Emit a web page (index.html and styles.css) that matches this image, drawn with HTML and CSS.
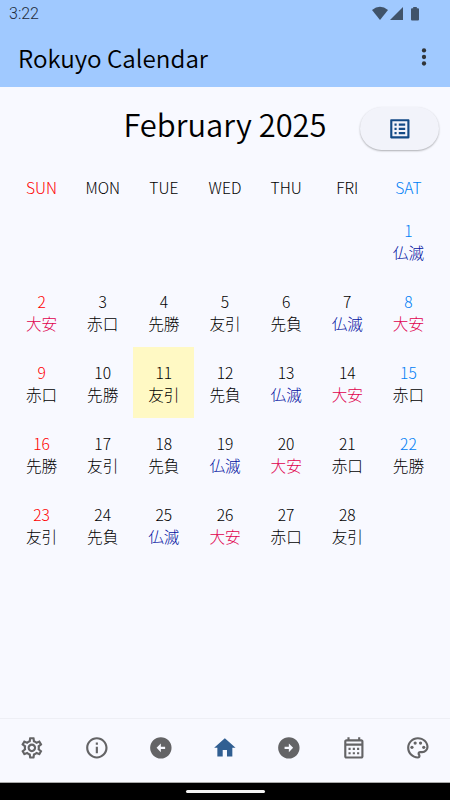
FILE: index.html
```html
<!DOCTYPE html>
<html lang="ja">
<head>
<meta charset="utf-8">
<meta name="viewport" content="width=device-width, initial-scale=1">
<title>Rokuyo Calendar</title>
<link rel="stylesheet" href="styles.css">
</head>
<body>
<header class="top">
  <div class="status">
    <span class="clock">3:22</span>
    <svg class="status-icons" viewBox="0 0 50 16" aria-hidden="true">
      <path d="M0 4Q8 -2.5 16 4L8 14Z"/>
      <path d="M31 1V14H18Z"/>
      <path d="M41.2 1h3.6v1.3H46q1 0 1 1V13.500q0 1-1 1h-6q-1 0-1-1V3.300q0-1 1-1h1.200Z"/>
    </svg>
  </div>
  <div class="appbar">
    <h1 class="app-title">Rokuyo Calendar</h1>
    <svg class="more" viewBox="0 0 6 20" aria-hidden="true"><circle cx="3" cy="3.400" r="2.150"/><circle cx="3" cy="10" r="2.150"/><circle cx="3" cy="16.500" r="2.150"/></svg>
  </div>
</header>
<main class="content">
  <div class="month-bar">
    <h2 class="month">February 2025</h2>
    <button class="list-button" aria-label="List">
      <svg class="icon" viewBox="0 0 24 24"><path d="M19 5v14H5V5h14m1.100-2H3.900c-.5 0-.9.4-.9.9v16.200c0 .4.4.9.9.9h16.200c.4 0 .9-.5.9-.9V3.900c0-.5-.5-.9-.9-.9zM11 7h6v2h-6V7zm0 4h6v2h-6v-2zm0 4h6v2h-6v-2zM7 7h2v2H7V7zm0 4h2v2H7v-2zm0 4h2v2H7v-2z"/></svg>
    </button>
  </div>
  <div class="weekdays">
    <span class="sun">SUN</span><span>MON</span><span>TUE</span><span>WED</span><span>THU</span><span>FRI</span><span class="sat">SAT</span>
  </div>
  <div class="days">
    <div class="day first"><span class="sat">1</span><span class="butsu">仏滅</span></div>
    <div class="day"><span class="sun">2</span><span class="taian">大安</span></div>
    <div class="day"><span>3</span><span>赤口</span></div>
    <div class="day"><span>4</span><span>先勝</span></div>
    <div class="day"><span>5</span><span>友引</span></div>
    <div class="day"><span>6</span><span>先負</span></div>
    <div class="day"><span>7</span><span class="butsu">仏滅</span></div>
    <div class="day"><span class="sat">8</span><span class="taian">大安</span></div>
    <div class="day"><span class="sun">9</span><span>赤口</span></div>
    <div class="day"><span>10</span><span>先勝</span></div>
    <div class="day today"><span>11</span><span>友引</span></div>
    <div class="day"><span>12</span><span>先負</span></div>
    <div class="day"><span>13</span><span class="butsu">仏滅</span></div>
    <div class="day"><span>14</span><span class="taian">大安</span></div>
    <div class="day"><span class="sat">15</span><span>赤口</span></div>
    <div class="day"><span class="sun">16</span><span>先勝</span></div>
    <div class="day"><span>17</span><span>友引</span></div>
    <div class="day"><span>18</span><span>先負</span></div>
    <div class="day"><span>19</span><span class="butsu">仏滅</span></div>
    <div class="day"><span>20</span><span class="taian">大安</span></div>
    <div class="day"><span>21</span><span>赤口</span></div>
    <div class="day"><span class="sat">22</span><span>先勝</span></div>
    <div class="day"><span class="sun">23</span><span>友引</span></div>
    <div class="day"><span>24</span><span>先負</span></div>
    <div class="day"><span>25</span><span class="butsu">仏滅</span></div>
    <div class="day"><span>26</span><span class="taian">大安</span></div>
    <div class="day"><span>27</span><span>赤口</span></div>
    <div class="day"><span>28</span><span>友引</span></div>
  </div>
</main>
<nav class="nav">
  <svg class="icon" viewBox="0 0 24 24"><path d="M19.430 12.980c.04-.32.07-.64.07-.98s-.03-.66-.07-.98l2.110-1.650c.19-.15.24-.42.12-.64l-2-3.460c-.09-.16-.26-.25-.44-.25-.06 0-.12.01-.17.03l-2.490 1c-.52-.4-1.080-.73-1.690-.98l-.38-2.650C14.460 2.180 14.250 2 14 2h-4c-.25 0-.46.18-.49.42l-.38 2.650c-.61.25-1.170.59-1.690.98l-2.490-1c-.06-.02-.12-.03-.18-.03-.17 0-.34.09-.43.25l-2 3.460c-.13.22-.07.49.12.64l2.110 1.650c-.04.32-.07.65-.07.98s.03.66.07.98l-2.110 1.650c-.19.15-.24.42-.12.64l2 3.460c.09.16.26.25.44.25.06 0 .12-.01.17-.03l2.490-1c.52.4 1.080.73 1.690.98l.38 2.650c.03.24.24.42.49.42h4c.25 0 .46-.18.49-.42l.38-2.650c.61-.25 1.170-.59 1.690-.98l2.490 1c.06.02.12.03.18.03.17 0 .34-.09.43-.25l2-3.460c.12-.22.07-.49-.12-.64l-2.110-1.650zm-1.980-1.710c.04.31.05.52.05.73 0 .21-.02.43-.05.73l-.14 1.130.89.7 1.080.84-.7 1.210-1.270-.51-1.040-.42-.9.68c-.43.32-.84.56-1.250.73l-1.060.43-.16 1.130-.2 1.350h-1.400l-.19-1.350-.16-1.130-1.060-.43c-.43-.18-.83-.41-1.230-.71l-.91-.7-1.060.43-1.270.51-.7-1.210 1.080-.84.89-.7-.14-1.130c-.03-.31-.05-.54-.05-.74s.02-.43.05-.73l.14-1.130-.89-.7-1.080-.84.7-1.210 1.270.51 1.040.42.9-.68c.43-.32.84-.56 1.250-.73l1.060-.43.16-1.130.2-1.350h1.390l.19 1.350.16 1.130 1.060.43c.43.18.83.41 1.230.71l.91.7 1.060-.43 1.270-.51.7 1.210-1.070.85-.89.7.14 1.130zM12 8c-2.210 0-4 1.790-4 4s1.790 4 4 4 4-1.790 4-4-1.790-4-4-4zm0 6c-1.100 0-2-.9-2-2s.9-2 2-2 2 .9 2 2-.9 2-2 2z"/></svg>
  <svg class="icon" viewBox="0 0 24 24"><path d="M11 7h2v2h-2V7zm0 4h2v6h-2v-6zm1-9C6.480 2 2 6.480 2 12s4.480 10 10 10 10-4.480 10-10S17.520 2 12 2zm0 18c-4.410 0-8-3.590-8-8s3.590-8 8-8 8 3.590 8 8-3.590 8-8 8z"/></svg>
  <svg class="icon" viewBox="0 0 24 24"><path fill-rule="evenodd" d="M12 2a10 10 0 1 0 0 20a10 10 0 0 0 0-20zM12 8v3h4v2h-4v3l-4-4z"/></svg>
  <svg class="icon home" viewBox="0 0 24 24"><path d="M10 20v-6h4v6h5v-8h3L12 3 2 12h3v8z"/></svg>
  <svg class="icon" viewBox="0 0 24 24"><path fill-rule="evenodd" d="M12 2a10 10 0 1 0 0 20a10 10 0 0 0 0-20zM12 8v3H8v2h4v3l4-4z"/></svg>
  <svg class="icon" viewBox="0 0 24 24"><path d="M19 4h-1V2h-2v2H8V2H6v2H5c-1.110 0-1.990.9-1.990 2L3 20c0 1.100.89 2 2 2h14c1.100 0 2-.9 2-2V6c0-1.100-.9-2-2-2zm0 16H5V10h14v10zm0-12H5V6h14v2zM9 14H7v-2h2v2zm4 0h-2v-2h2v2zm4 0h-2v-2h2v2zm-8 4H7v-2h2v2zm4 0h-2v-2h2v2zm4 0h-2v-2h2v2z"/></svg>
  <svg class="icon" viewBox="0 0 24 24"><path d="M12 22C6.490 22 2 17.510 2 12S6.490 2 12 2s10 4.040 10 9c0 3.310-2.690 6-6 6h-1.770c-.28 0-.5.22-.5.5 0 .12.05.23.13.33.41.47.64 1.060.64 1.670A2.500 2.500 0 0 1 12 22zm0-18c-4.410 0-8 3.590-8 8s3.590 8 8 8c.28 0 .5-.22.5-.5a.54.54 0 0 0-.14-.35c-.41-.46-.63-1.050-.63-1.650a2.500 2.500 0 0 1 2.500-2.500H16c2.210 0 4-1.790 4-4 0-3.860-3.590-7-8-7z"/><circle cx="6.500" cy="11.500" r="1.500"/><circle cx="9.500" cy="7.500" r="1.500"/><circle cx="14.500" cy="7.500" r="1.500"/><circle cx="17.500" cy="11.500" r="1.500"/></svg>
</nav>
<footer class="gesture"><div class="handle"></div></footer>
</body>
</html>
```
FILE: styles.css
```css
* { box-sizing: border-box; }

body {
  margin: 0;
  height: 800px;
  display: flex;
  flex-direction: column;
  overflow: hidden;
  background: #f8f9ff;
  color: #000;
  font-family: "Noto Sans CJK JP", sans-serif;
  font-weight: 300;
}

.top { height: 87px; background: #a0c9ff; }

.status {
  height: 27px;
  padding: 0 28px 0 9px;
  display: flex;
  align-items: center;
  justify-content: space-between;
  color: #1f2c3b;
}
.clock { font: 300 16px/27px Roboto, sans-serif; }
.status-icons { width: 50px; height: 16px; fill: #40536a; }

.appbar {
  height: 60px;
  padding: 0 23px 0 18px;
  display: flex;
  align-items: center;
  justify-content: space-between;
}
.app-title { margin: 2px 0 0; font-size: 24.200px; line-height: 36px; font-weight: 350; }
.more { width: 6px; height: 20px; fill: #303438; }

.content { flex: 1; padding: 0 11px; }

.month-bar {
  height: 76px;
  display: grid;
  grid-template-columns: 80px 1fr 80px;
  align-items: center;
}
.month {
  grid-column: 2;
  margin: -2px 0 0;
  text-align: center;
  font-size: 30.900px;
  line-height: 48px;
  font-weight: 350;
}
.list-button {
  height: 43px;
  margin: 7px 0 0 1px;
  padding: 0;
  border: 0;
  border-radius: 22px;
  background: #f2f3fa;
  box-shadow: 0 1px 2px rgba(0, 0, 0, .3);
  display: grid;
  place-items: center;
}
.list-button .icon { fill: #134a86; }

.icon { width: 25.700px; height: 25.700px; fill: #646466; }

.weekdays, .days {
  display: grid;
  grid-template-columns: repeat(7, 1fr);
  text-align: center;
  font-size: 15.600px;
}
.weekdays { height: 42.200px; line-height: 49px; }
.days { grid-auto-rows: 71.100px; }
.day {
  display: flex;
  flex-direction: column;
  justify-content: center;
  line-height: 22px;
}
.first { grid-column: 7; }
.today { background: #fff9c4; }

.sun { color: #f00; }
.sat { color: #0080f5; }
.butsu { color: #0010a0; }
.taian { color: #e0004d; }

.nav {
  height: 65px;
  border-top: 1px solid #eeeff5;
  border-bottom: 1px solid #aaa;
  display: grid;
  grid-template-columns: repeat(7, 1fr);
  place-items: center;
}
.nav .icon { margin-bottom: 5px; }
.nav .home { fill: #315f92; }

.gesture {
  height: 17px;
  background: #000;
  display: grid;
  place-items: center;
}
.handle { width: 79px; height: 3px; border-radius: 2px; background: #f3f3f3; }
```
